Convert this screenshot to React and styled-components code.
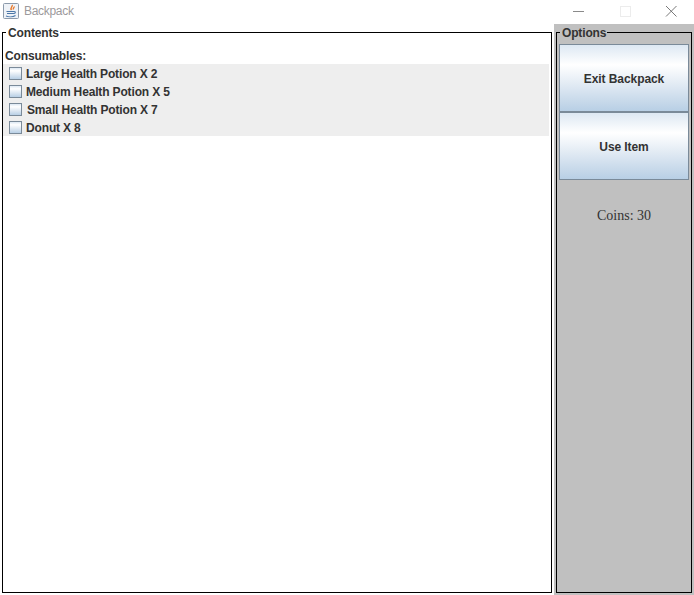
import React from "react";
import styled, { createGlobalStyle } from "styled-components";

const Global = createGlobalStyle`
  html, body { margin: 0; padding: 0; background: #fff; overflow: hidden; }
  * { box-sizing: border-box; }
`;
const Window = styled.div`
  width: 694px; height: 595px; display: flex; flex-direction: column; background: #fff;
  font-family: "Liberation Sans", Arial, sans-serif; overflow: hidden;
`;
const TitleBar = styled.div`
  height: 24px; flex: none; display: flex; align-items: center; padding: 0 0 2px 3px; gap: 5px;
`;
const AppIcon = styled.svg` width: 16px; height: 16px; flex: none; `;
const Title = styled.span` font-size: 12px; color: #9c9a9c; letter-spacing: -0.3px; `;
const Controls = styled.div` margin-left: auto; display: flex; align-items: center; `;
const Control = styled.svg` width: 46px; height: 12px; display: block; `;
const Body = styled.div` flex: 1; display: flex; min-height: 0; `;
const LeftPane = styled.div` width: 554px; flex: none; padding: 0 2px 2px 2px; display: flex; `;
const RightPane = styled.div` flex: 1; background: #c0c0c0; padding: 0 2px 2px 2px; display: flex; `;
const Group = styled.fieldset`
  flex: 1; min-width: 0; margin: 0; padding: 0; border: 1px solid #000; display: flex; flex-direction: column;
`;
const Legend = styled.legend`
  margin-left: 3px; padding: 0 1px 0 2px; font-size: 12px; font-weight: 700; color: #333; line-height: 18px; height: 16px;
  letter-spacing: -0.15px;
`;
const Heading = styled.div`
  font-size: 12px; font-weight: 700; color: #333; line-height: 14px; padding: 9px 0 1px 2px; letter-spacing: -0.12px;
`;
const List = styled.ul` list-style: none; margin: 0 2px 0 0; padding: 0; background: #eeeeee; `;
const Row = styled.li` height: 18px; display: flex; align-items: center; padding-left: 6px; gap: 4px; `;
const Box = styled.span`
  width: 13px; height: 13px; flex: none; border: 1px solid #7a8a99;
  background: linear-gradient(180deg, #dde8f3 0%, #ffffff 25%, #d5e2ef 70%, #b8cfe5 100%);
`;
const Label = styled.span`
  font-size: 12px; font-weight: 700; color: #333; white-space: nowrap; letter-spacing: -0.15px;
  padding-top: 2px; padding-left: ${p => p.$nudge || 0}px;
`;
const Buttons = styled.div` display: flex; flex-direction: column; padding: 0 2px; margin-top: 4px; `;
const Button = styled.button`
  height: 68px; border: 1px solid #7a8a99; margin: 0; padding: 2px 0 0; font: 700 12px "Liberation Sans", Arial, sans-serif; color: #333;
  letter-spacing: -0.08px;
  background: linear-gradient(180deg, #dde8f3 0%, #ffffff 30%, #d5e2ef 72%, #b8cfe5 100%);
`;
const Coins = styled.div`
  margin-top: 27px; text-align: center; font: 14px "Liberation Serif", "Times New Roman", serif; color: #333; line-height: 18px;
`;

export default function App() {
  return (
    <Window>
      <Global />
      <TitleBar>
        <AppIcon viewBox="0 0 16 16">
          <rect x="0.5" y="0.5" width="15" height="15" rx="1" fill="#eef2f7" stroke="#8c9aab" />
          <path d="M9 2c1.500 1.500-2.500 2.500-.5 5M11 3.500c.7 1-1.500 1.800-.5 3" stroke="#e8782a" strokeWidth="1.400" fill="none" />
          <path d="M3.500 8.500h7M4 10.500h6M3 13c2.500 1 7 1 9.500-.5M10.500 8.500c2.500-.3 2.500 2.200-.5 2" stroke="#4a76a8" strokeWidth="1.100" fill="none" />
        </AppIcon>
        <Title>Backpack</Title>
        <Controls>
          <Control viewBox="0 0 46 12"><path d="M17 6.500h11" stroke="#8a8a8a" /></Control>
          <Control viewBox="0 0 46 12"><rect x="18.500" y="1.500" width="10" height="10" fill="none" stroke="#ececec" /></Control>
          <Control viewBox="0 0 46 12"><path d="M18 1l10.500 10.500M28.500 1L18 11.500" stroke="#6a6a6a" strokeWidth="0.9" /></Control>
        </Controls>
      </TitleBar>
      <Body>
        <LeftPane>
          <Group>
            <Legend>Contents</Legend>
            <Heading>Consumables:</Heading>
            <List>
              <Row><Box /><Label>Large Health Potion X 2</Label></Row>
              <Row><Box /><Label>Medium Health Potion X 5</Label></Row>
              <Row><Box /><Label $nudge={1}>Small Health Potion X 7</Label></Row>
              <Row><Box /><Label>Donut X 8</Label></Row>
            </List>
          </Group>
        </LeftPane>
        <RightPane>
          <Group>
            <Legend>Options</Legend>
            <Buttons>
              <Button>Exit Backpack</Button>
              <Button>Use Item</Button>
            </Buttons>
            <Coins>Coins: 30</Coins>
          </Group>
        </RightPane>
      </Body>
    </Window>
  );
}
